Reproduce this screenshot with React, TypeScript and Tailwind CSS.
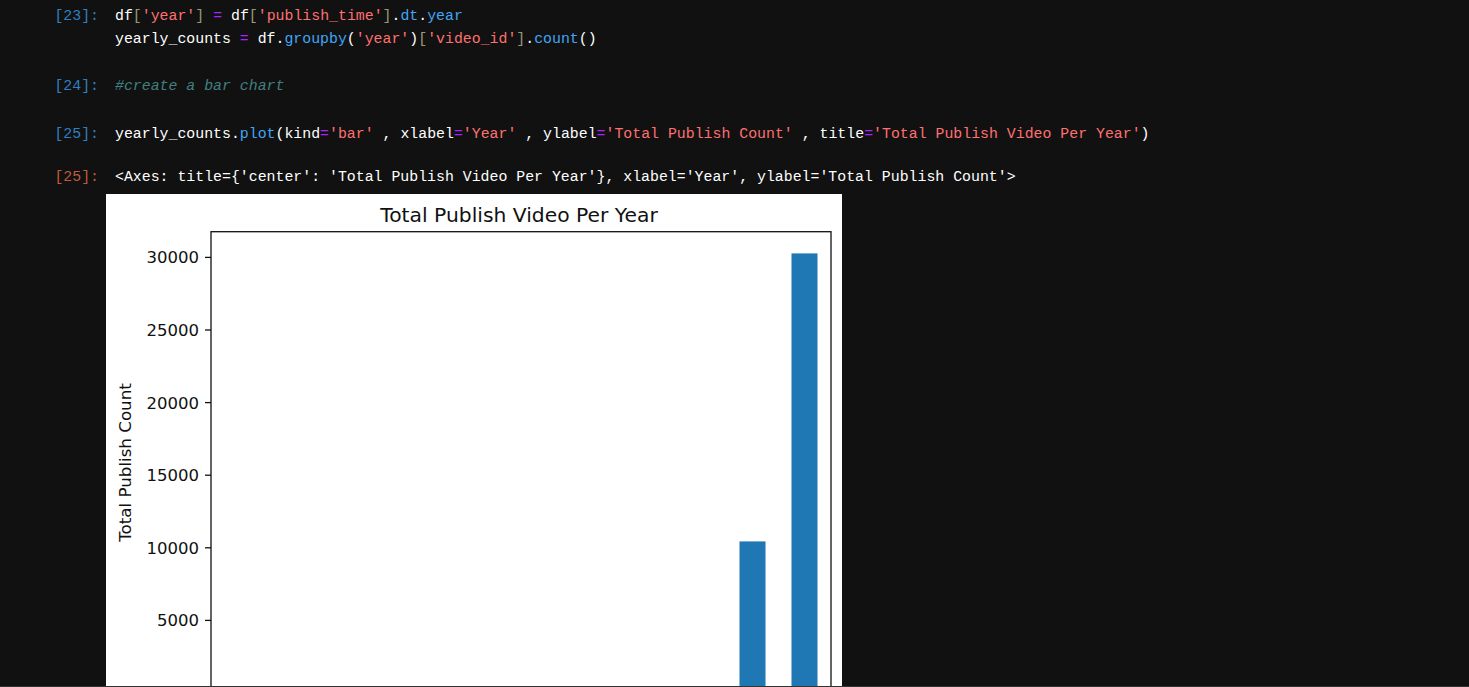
import React from 'react';

// JupyterLab dark palette
const C = {
  str: 'text-[#ff7070]',
  op: 'text-[#aa22ff]',
  prop: 'text-[#42a5f5]',
  br: 'text-[#999977]',
  txt: 'text-white',
};

const S = ({ c, children }: { c: string; children: React.ReactNode }) => <span className={c}>{children}</span>;

const Cell = ({ prompt, out, children }: { prompt: string; out?: boolean; children: React.ReactNode }) => (
  <div className="flex">
    <div className={`w-[99px] shrink-0 text-right ${out ? 'text-[#bf5b3d]' : 'text-[#307fc1]'}`}>{prompt}</div>
    <div className="ml-4 whitespace-pre text-white">{children}</div>
  </div>
);

const Chart = () => {
  const zeroY = 499;
  const perUnit = 72.6 / 5000;
  const y = (v: number) => zeroY - v * perUnit;
  const ticks = [5000, 10000, 15000, 20000, 25000, 30000];
  const bars = [
    { x: 633.5, v: 10440 },
    { x: 685.5, v: 30275 },
  ];
  return (
    <svg width="736" height="520" viewBox="0 0 736 520" className="block bg-white" style={{ fontFamily: '"DejaVu Sans", sans-serif' }}>
      <text x="413" y="27.7" textAnchor="middle" fontSize="20.3" fill="#111">Total Publish Video Per Year</text>
      {bars.map((b, i) => (
        <rect key={i} x={b.x} y={y(b.v)} width="26" height={zeroY - y(b.v)} fill="#1f77b4" />
      ))}
      <rect x="105" y="37.7" width="620" height={zeroY - 37.7} fill="none" stroke="#111" strokeWidth="1.3" />
      {ticks.map(t => (
        <g key={t}>
          <line x1="99" x2="105" y1={y(t)} y2={y(t)} stroke="#111" strokeWidth="1.3" />
          <text x="93" y={y(t) + 6} textAnchor="end" fontSize="16.5" fill="#111">{t}</text>
        </g>
      ))}
      <text x="0" y="0" transform="translate(25 268.5) rotate(-90)" textAnchor="middle" fontSize="16.7" fill="#111">Total Publish Count</text>
    </svg>
  );
};

const App: React.FC = () => {
  return (
    <div className="h-[687px] w-full bg-[#111111] border-b border-[#333333]">
      <div className="h-full overflow-hidden pt-[5px] text-[14.87px] leading-[23px]" style={{ fontFamily: '"Liberation Mono", "DejaVu Sans Mono", monospace' }}>
        <Cell prompt="[23]:">
          <div>
            df<S c={C.br}>[</S><S c={C.str}>'year'</S><S c={C.br}>]</S> <S c={C.op}>=</S> df<S c={C.br}>[</S><S c={C.str}>'publish_time'</S><S c={C.br}>]</S>.<S c={C.prop}>dt</S>.<S c={C.prop}>year</S>
          </div>
          <div>
            yearly_counts <S c={C.op}>=</S> df.<S c={C.prop}>groupby</S>(<S c={C.str}>'year'</S>)<S c={C.br}>[</S><S c={C.str}>'video_id'</S><S c={C.br}>]</S>.<S c={C.prop}>count</S>()
          </div>
        </Cell>
        <div className="mt-6">
          <Cell prompt="[24]:">
            <span className="italic text-[#408080]">#create a bar chart</span>
          </Cell>
        </div>
        <div className="mt-[25px]">
          <Cell prompt="[25]:">
            yearly_counts.<S c={C.prop}>plot</S>(kind<S c={C.op}>=</S><S c={C.str}>'bar'</S> , xlabel<S c={C.op}>=</S><S c={C.str}>'Year'</S> , ylabel<S c={C.op}>=</S><S c={C.str}>'Total Publish Count'</S> , title<S c={C.op}>=</S><S c={C.str}>'Total Publish Video Per Year'</S>)
          </Cell>
        </div>
        <div className="mt-5">
          <Cell prompt="[25]:" out>
            {"<Axes: title={'center': 'Total Publish Video Per Year'}, xlabel='Year', ylabel='Total Publish Count'>"}
          </Cell>
        </div>
        <div className="mt-[5px] pl-[106px]">
          <Chart />
        </div>
      </div>
    </div>
  );
};

export default App;
